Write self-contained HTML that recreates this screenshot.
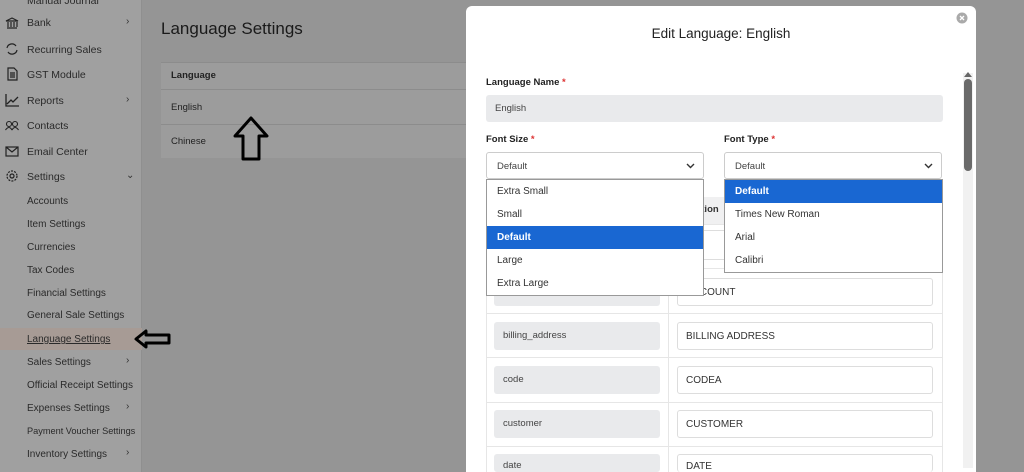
<!DOCTYPE html>
<html style="width:1024px;height:472px;overflow:hidden"><head><meta charset="utf-8"><style>
*{box-sizing:border-box;margin:0;padding:0}
body{width:1024px;height:472px;overflow:hidden;position:relative;font-family:"Liberation Sans",sans-serif;background:#959595}
.sb{position:absolute;left:0;top:0;width:142px;height:472px;background:#a0a0a0;border-right:1px solid #8f8f8f}
.it{position:absolute;left:27px;font-size:10px;color:#2a2a2a;white-space:nowrap}
.top{font-size:10.5px}
.ic{position:absolute;left:5px;width:14px;height:14px}
.chev{position:absolute;left:126px;font-size:10px;color:#333}
.a{position:absolute;color:#222}
.modal{position:absolute;left:466px;top:6px;width:510px;height:466px;background:#fff;border-radius:6px 6px 0 0;overflow:hidden}
.lbl{position:absolute;font-size:9.5px;font-weight:bold;color:#222}
.req{color:#d33}
.sel{position:absolute;height:27px;border:1px solid #ccc;border-radius:3px;background:#fff;font-size:9.5px;color:#444;padding:8px 10px}
.dd{position:absolute;background:#fff;border:1px solid #999;font-size:10px;color:#333}
.dd div{height:23px;line-height:23px;padding-left:10px}
.dd .on{background:#1967d2;color:#fff;font-weight:bold}
.gray{position:absolute;background:#e9eaec;border-radius:3px;font-size:9.5px;color:#444;padding-left:9px}
.inp{position:absolute;border:1px solid #ddd;border-radius:3px;background:#fff;font-size:10px;color:#333;padding-left:8px}
.hl{position:absolute;left:486px;width:457px;height:1px;background:#e6e6e6}
</style></head><body>
<div class="sb">
<div style="position:absolute;left:0;top:328px;width:142px;height:22px;background:#a79b95"></div>
<div class="it top" style="top:-5px">Manual Journal</div>
<svg class="ic" style="top:16px" viewBox="0 0 14 14" fill="none" stroke="#222" stroke-width="1.2"><path d="M1 5L7 2L13 5ZM2 12H12M3 6V11M6 6V11M9 6V11M12 6V11"/></svg>
<div class="it top" style="top:17px">Bank</div><div class="chev" style="top:16px">›</div>
<svg class="ic" style="top:42px" viewBox="0 0 14 14" fill="none" stroke="#222" stroke-width="1.2"><path d="M2 6A5 5 0 0 1 11 4M12 8A5 5 0 0 1 3 10"/></svg>
<div class="it top" style="top:44px">Recurring Sales</div>
<svg class="ic" style="top:67px" viewBox="0 0 14 14" fill="none" stroke="#222" stroke-width="1.2"><path d="M3 1H9L12 4V13H3ZM5 6H10M5 8H10M5 10H10"/></svg>
<div class="it top" style="top:69px">GST Module</div>
<svg class="ic" style="top:93px" viewBox="0 0 14 14" fill="none" stroke="#222" stroke-width="1.3"><path d="M1 1V13H14M2 11L6 7L8 9L13 4"/></svg>
<div class="it top" style="top:95px">Reports</div><div class="chev" style="top:94px">›</div>
<svg class="ic" style="top:119px" viewBox="0 0 14 14" fill="none" stroke="#222" stroke-width="1.1"><circle cx="4" cy="5" r="2.5"/><circle cx="10" cy="5" r="2.5"/><path d="M0.5 11Q4 6 7 11M7 11Q10 6 13.5 11"/></svg>
<div class="it top" style="top:120px">Contacts</div>
<svg class="ic" style="top:144px" viewBox="0 0 14 14" fill="none" stroke="#222" stroke-width="1.2"><rect x="1" y="3" width="12" height="9"/><path d="M1 3L7 8L13 3"/></svg>
<div class="it top" style="top:146px">Email Center</div>
<svg class="ic" style="top:169px" viewBox="0 0 14 14" fill="none" stroke="#222" stroke-width="1.2"><circle cx="7" cy="7" r="2"/><circle cx="7" cy="7" r="5" stroke-dasharray="2 1.2"/></svg>
<div class="it top" style="top:171px">Settings</div><div class="chev" style="top:170px">⌄</div>
<div class="it" style="top:196px">Accounts</div>
<div class="it" style="top:219px">Item Settings</div>
<div class="it" style="top:242px">Currencies</div>
<div class="it" style="top:265px">Tax Codes</div>
<div class="it" style="top:288px">Financial Settings</div>
<div class="it" style="top:310px">General Sale Settings</div>
<div class="it" style="top:334px;text-decoration:underline">Language Settings</div>
<div class="it" style="top:357px">Sales Settings</div><div class="chev" style="top:355px">›</div>
<div class="it" style="top:380px">Official Receipt Settings</div>
<div class="it" style="top:403px">Expenses Settings</div><div class="chev" style="top:401px">›</div>
<div class="it" style="top:426px;font-size:9.2px">Payment Voucher Settings</div>
<div class="it" style="top:449px">Inventory Settings</div><div class="chev" style="top:447px">›</div>
</div>
<svg style="position:absolute;left:133px;top:327px" width="40" height="24" viewBox="0 0 40 24"><path d="M3 12L13 4V8H36V16H13V20Z" fill="none" stroke="#000" stroke-width="3" stroke-linejoin="round"/></svg>
<div class="a" style="left:161px;top:19px;font-size:17px;color:#1a1a1a">Language Settings</div>
<div style="position:absolute;left:161px;top:62px;width:310px;height:96px;background:#9c9c9c"></div>
<div style="position:absolute;left:161px;top:62px;width:310px;height:1px;background:#8c8c8c"></div>
<div style="position:absolute;left:161px;top:89px;width:310px;height:1px;background:#8c8c8c"></div>
<div style="position:absolute;left:161px;top:124px;width:310px;height:1px;background:#8c8c8c"></div>
<div class="a" style="left:171px;top:70px;font-size:9.5px;font-weight:bold">Language</div>
<div class="a" style="left:171px;top:102px;font-size:9.5px">English</div>
<div class="a" style="left:171px;top:136px;font-size:9.5px">Chinese</div>
<svg style="position:absolute;left:232px;top:116px" width="38" height="46" viewBox="0 0 38 46"><path d="M19 2L35 20H27V43H11V20H3Z" fill="none" stroke="#000" stroke-width="3" stroke-linejoin="round"/></svg>
<div class="modal">
<div style="position:absolute;left:0;width:510px;top:20px;text-align:center;font-size:13.5px;color:#222">Edit Language: English</div>
<svg style="position:absolute;left:490px;top:6px" width="12" height="12" viewBox="0 0 12 12"><circle cx="6" cy="6" r="5.5" fill="#aaa"/><path d="M4 4L8 8M8 4L4 8" stroke="#fff" stroke-width="1.3"/></svg>
<div style="position:absolute;left:497px;top:67px;width:10px;height:395px;background:#f1f1f1"></div>
<div style="position:absolute;left:498px;top:66px;width:0;height:0;border-left:4px solid transparent;border-right:4px solid transparent;border-bottom:5px solid #666"></div>
<div style="position:absolute;left:498px;top:73px;width:8px;height:92px;background:#6a6a6a;border-radius:4px"></div>
</div>
<div class="lbl" style="left:486px;top:77px">Language Name <span class="req">*</span></div>
<div class="gray" style="left:486px;top:95px;width:457px;height:27px;line-height:27px">English</div>
<div class="lbl" style="left:486px;top:134px">Font Size <span class="req">*</span></div>
<div class="lbl" style="left:724px;top:134px">Font Type <span class="req">*</span></div>
<div class="sel" style="left:486px;top:152px;width:218px">Default<svg style="position:absolute;right:8px;top:10px" width="9" height="6" viewBox="0 0 9 6"><path d="M1 1L4.5 4.5L8 1" fill="none" stroke="#333" stroke-width="1.4"/></svg></div>
<div class="sel" style="left:724px;top:152px;width:218px">Default<svg style="position:absolute;right:8px;top:10px" width="9" height="6" viewBox="0 0 9 6"><path d="M1 1L4.5 4.5L8 1" fill="none" stroke="#333" stroke-width="1.4"/></svg></div>
<div style="position:absolute;left:486px;top:197px;width:457px;height:27px;background:#f0f0f1"></div>
<div style="position:absolute;left:668px;top:204px;font-size:9.5px;font-weight:bold;color:#333">Translation</div>
<div class="hl" style="top:224px"></div>
<div class="inp" style="left:677px;top:230px;width:256px;height:30px;line-height:30px">A</div>
<div class="hl" style="top:268px"></div>
<div class="gray" style="left:494px;top:278px;width:166px;height:28px"></div>
<div class="inp" style="left:677px;top:278px;width:256px;height:28px;line-height:28px">ACCOUNT</div>
<div class="hl" style="top:313px"></div>
<div class="gray" style="left:494px;top:322px;width:166px;height:28px;line-height:28px">billing_address</div>
<div class="inp" style="left:677px;top:322px;width:256px;height:28px;line-height:28px">BILLING ADDRESS</div>
<div class="hl" style="top:357px"></div>
<div class="gray" style="left:494px;top:366px;width:166px;height:28px;line-height:28px">code</div>
<div class="inp" style="left:677px;top:366px;width:256px;height:28px;line-height:28px">CODEA</div>
<div class="hl" style="top:402px"></div>
<div class="gray" style="left:494px;top:410px;width:166px;height:28px;line-height:28px">customer</div>
<div class="inp" style="left:677px;top:410px;width:256px;height:28px;line-height:28px">CUSTOMER</div>
<div class="hl" style="top:446px"></div>
<div class="gray" style="left:494px;top:454px;width:166px;height:18px;line-height:24px">date</div>
<div class="inp" style="left:677px;top:454px;width:256px;height:18px;line-height:24px;border-bottom:none">DATE</div>
<div style="position:absolute;left:486px;top:197px;width:1px;height:275px;background:#e6e6e6"></div>
<div style="position:absolute;left:668px;top:197px;width:1px;height:275px;background:#e6e6e6"></div>
<div style="position:absolute;left:942px;top:197px;width:1px;height:275px;background:#e6e6e6"></div>
<div class="dd" style="left:486px;top:179px;width:218px;height:117px">
<div>Extra Small</div><div>Small</div><div class="on">Default</div><div>Large</div><div>Extra Large</div></div>
<div class="dd" style="left:724px;top:179px;width:219px;height:94px">
<div class="on">Default</div><div>Times New Roman</div><div>Arial</div><div>Calibri</div></div>
</body></html>
